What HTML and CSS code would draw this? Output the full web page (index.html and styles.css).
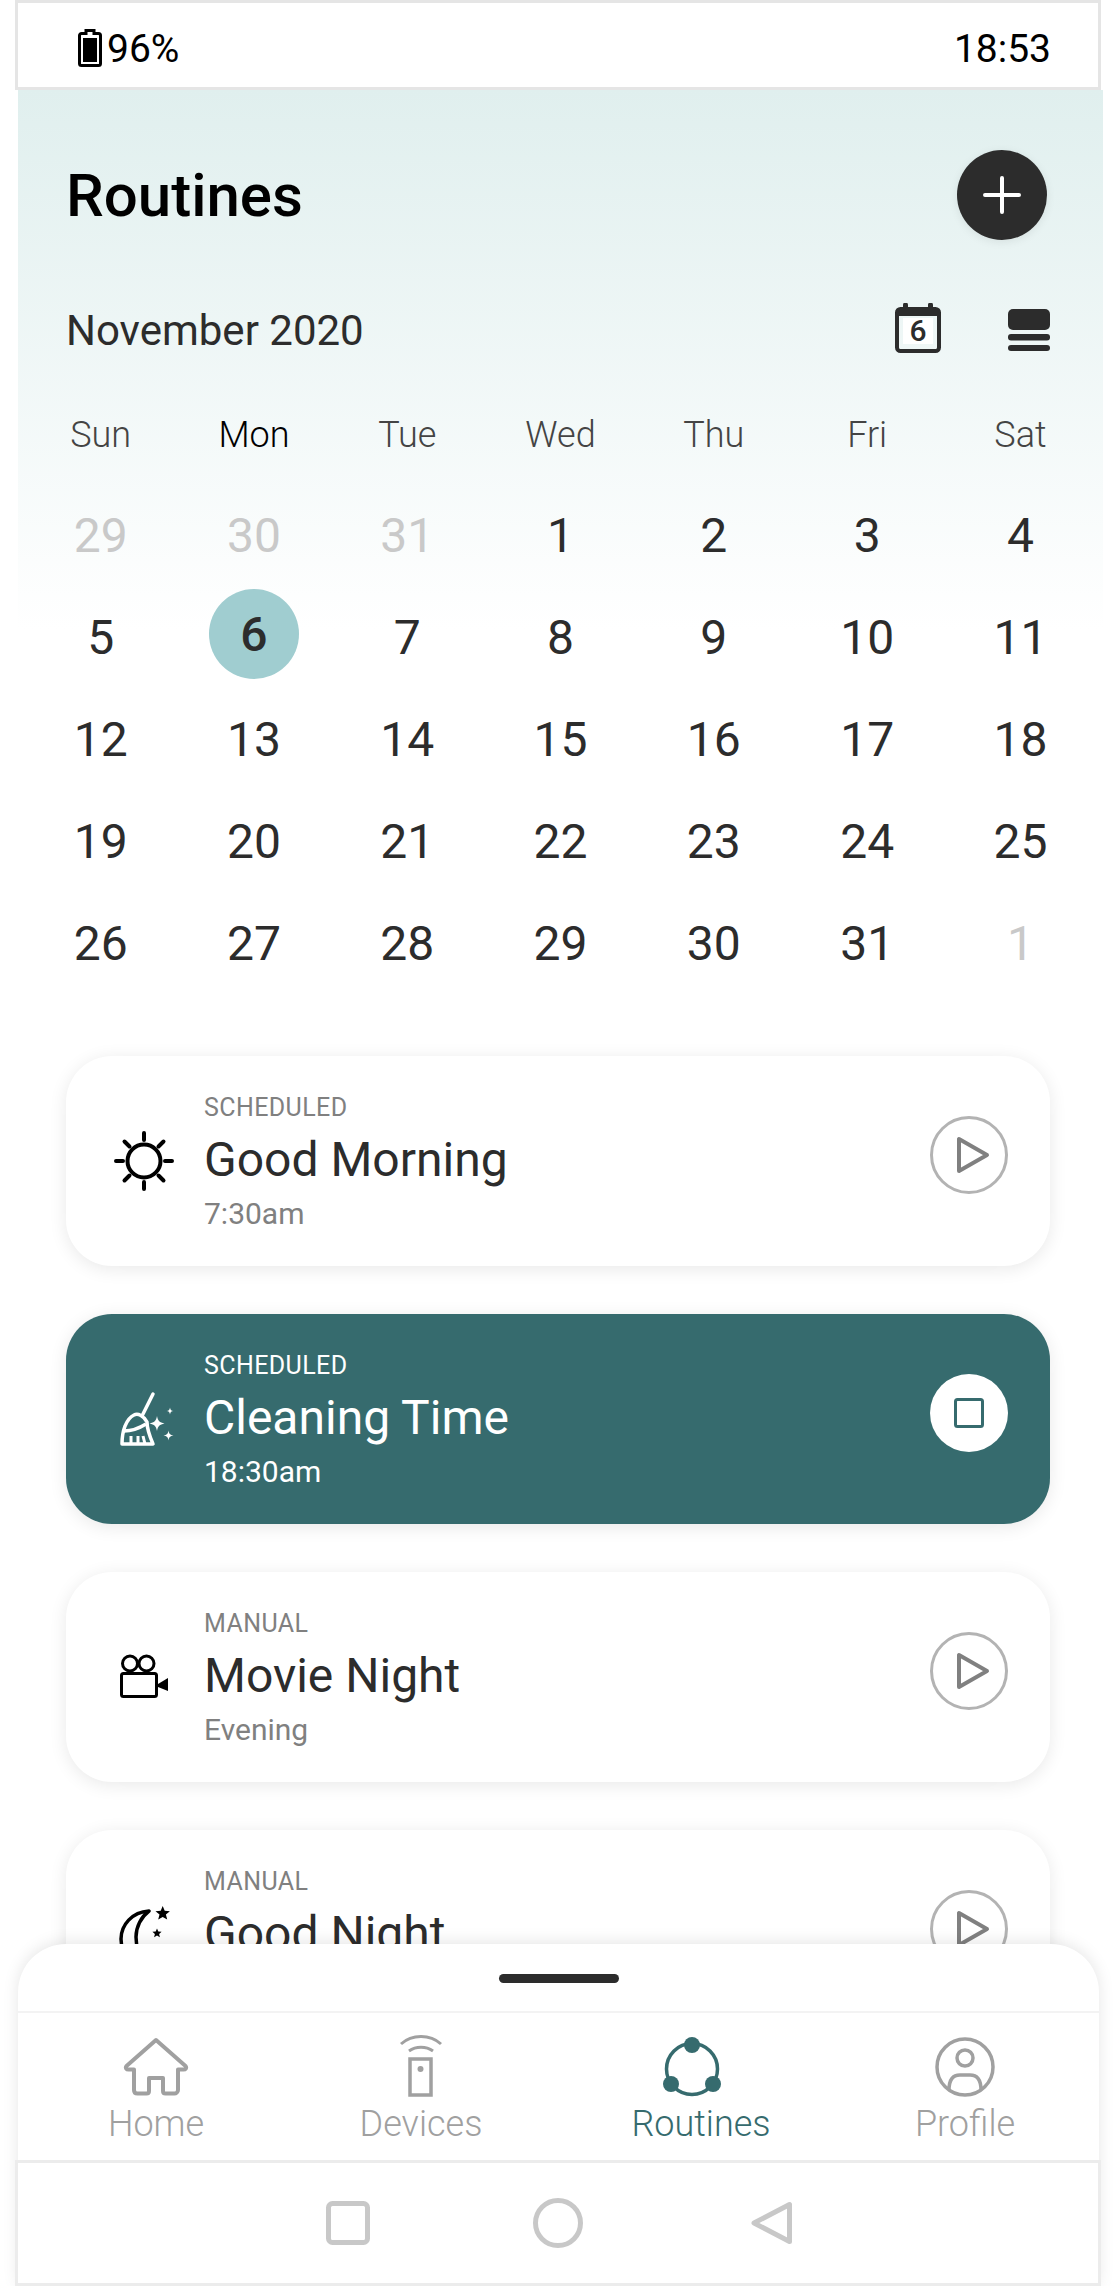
FILE: index.html
```html
<!DOCTYPE html>
<html lang="en">
<head>
    <meta charset="UTF-8">
    <meta name="viewport" content="width=device-width, initial-scale=1.0">
    <title>Routines</title>
    <link rel="stylesheet" href="styles.css">
</head>
<body>
    <div class="phone">
        <div class="status-bar">
            <div class="status-left">
                <svg class="battery-icon" viewBox="0 0 24 38">
                    <path d="M8 1.500h8v3h4.500a2 2 0 0 1 2 2v28a2 2 0 0 1-2 2h-17a2 2 0 0 1-2-2v-28a2 2 0 0 1 2-2H8z" fill="none" stroke="#000" stroke-width="3"/>
                    <rect x="5" y="9" width="14" height="24" fill="#000"/>
                </svg>
                <span>96%</span>
            </div>
            <span>18:53</span>
        </div>

        <div class="screen">
            <div class="title-row">
                <h1>Routines</h1>
                <button class="add-btn">
                    <svg viewBox="0 0 38 38" width="38" height="38">
                        <path d="M19 2v34M2 19h34" stroke="#fff" stroke-width="4" stroke-linecap="round"/>
                    </svg>
                </button>
            </div>

            <div class="month-row">
                <div class="month-name">November 2020</div>
                <svg class="cal-icon" viewBox="0 0 46 50" width="46" height="50">
                    <path d="M10.500 2v7M35.500 2v7" stroke="#2c2c2c" stroke-width="5" stroke-linecap="round"/>
                    <rect x="2" y="6" width="42" height="42" rx="3.500" fill="none" stroke="#2c2c2c" stroke-width="4"/>
                    <rect x="2" y="6" width="42" height="7" fill="#2c2c2c"/>
                    <rect x="8" y="15" width="30" height="26" fill="#fff"/>
                    <text x="23" y="38" text-anchor="middle" class="cal-icon-day">6</text>
                </svg>
                <svg class="tile-icon" viewBox="0 0 42 42" width="42" height="42">
                    <rect width="42" height="21" rx="5" fill="#2c2c2c"/>
                    <rect y="25" width="42" height="6.500" rx="3" fill="#2c2c2c"/>
                    <rect y="36" width="42" height="6" rx="3" fill="#2c2c2c"/>
                </svg>
            </div>

            <div class="calendar">
                <div class="week-head">Sun</div>
                <div class="week-head week-head-now">Mon</div>
                <div class="week-head">Tue</div>
                <div class="week-head">Wed</div>
                <div class="week-head">Thu</div>
                <div class="week-head">Fri</div>
                <div class="week-head">Sat</div>

                <div class="day day-off">29</div>
                <div class="day day-off">30</div>
                <div class="day day-off">31</div>
                <div class="day">1</div>
                <div class="day">2</div>
                <div class="day">3</div>
                <div class="day">4</div>

                <div class="day">5</div>
                <div class="day"><span class="day-selected">6</span></div>
                <div class="day">7</div>
                <div class="day">8</div>
                <div class="day">9</div>
                <div class="day">10</div>
                <div class="day">11</div>

                <div class="day">12</div>
                <div class="day">13</div>
                <div class="day">14</div>
                <div class="day">15</div>
                <div class="day">16</div>
                <div class="day">17</div>
                <div class="day">18</div>

                <div class="day">19</div>
                <div class="day">20</div>
                <div class="day">21</div>
                <div class="day">22</div>
                <div class="day">23</div>
                <div class="day">24</div>
                <div class="day">25</div>

                <div class="day">26</div>
                <div class="day">27</div>
                <div class="day">28</div>
                <div class="day">29</div>
                <div class="day">30</div>
                <div class="day">31</div>
                <div class="day day-off">1</div>
            </div>

            <div class="routine-list">
                <div class="routine-card">
                    <svg class="routine-icon" viewBox="0 0 60 60" width="60" height="60">
                        <circle cx="30" cy="30" r="16.500" fill="none" stroke="#000" stroke-width="4"/>
                        <path d="M30 2v7M30 51v7M2 30h7M51 30h7M10.500 10.500l5 5M44.500 44.500l5 5M10.500 49.500l5-5M44.500 15.500l5-5" stroke="#000" stroke-width="4" stroke-linecap="round"/>
                    </svg>
                    <div class="routine-text">
                        <div class="routine-type">SCHEDULED</div>
                        <div class="routine-name">Good Morning</div>
                        <div class="routine-time">7:30am</div>
                    </div>
                    <button class="play-btn">
                        <svg viewBox="0 0 34 38" width="34" height="38">
                            <path d="M3 3v32l28-16z" fill="none" stroke="#808080" stroke-width="4" stroke-linejoin="round"/>
                        </svg>
                    </button>
                </div>

                <div class="routine-card routine-card-active">
                    <svg class="routine-icon" viewBox="0 0 60 60" width="60" height="60">
                        <path d="M39 5L28 27" stroke="#fff" stroke-width="3.500" stroke-linecap="round"/>
                        <path d="M20 26C24 24 30 27 33 33C33 40 36 48 39 55H8C8 42 12 30 20 26z" fill="none" stroke="#fff" stroke-width="3.500" stroke-linejoin="round"/>
                        <path d="M10 42C16 42 24 40 32 35" fill="none" stroke="#fff" stroke-width="3.500"/>
                        <path d="M17 55v-8M24 55v-8M31 55l-2-8" stroke="#fff" stroke-width="3"/>
                        <path d="M43 27c1 5 2.500 6.500 7.500 7.500-5 1-6.500 2.500-7.500 7.500-1-5-2.500-6.500-7.500-7.500 5-1 6.500-2.500 7.500-7.500z" fill="#fff"/>
                        <path d="M56 18.500c.4 2.500 1 3.100 3.500 3.500-2.500.4-3.100 1-3.500 3.500-.4-2.500-1-3.100-3.500-3.500 2.500-.4 3.100-1 3.500-3.500z" fill="#fff"/>
                        <path d="M54.500 41.500c.6 3.500 1.500 4.400 5 5-3.500.6-4.400 1.500-5 5-.6-3.500-1.500-4.400-5-5 3.500-.6 4.400-1.500 5-5z" fill="#fff"/>
                    </svg>
                    <div class="routine-text">
                        <div class="routine-type">SCHEDULED</div>
                        <div class="routine-name">Cleaning Time</div>
                        <div class="routine-time">18:30am</div>
                    </div>
                    <button class="play-btn stop-btn">
                        <svg viewBox="0 0 30 30" width="30" height="30">
                            <rect x="1.500" y="1.500" width="27" height="27" rx="2" fill="none" stroke="#366b6e" stroke-width="3"/>
                        </svg>
                    </button>
                </div>

                <div class="routine-card">
                    <svg class="routine-icon" viewBox="0 0 60 60" width="60" height="60">
                        <circle cx="16" cy="16.500" r="7.500" fill="none" stroke="#000" stroke-width="3"/>
                        <circle cx="32.500" cy="16.500" r="7.500" fill="none" stroke="#000" stroke-width="3"/>
                        <rect x="7.500" y="26.500" width="35" height="23" rx="2" fill="#fff" stroke="#000" stroke-width="3"/>
                        <path d="M44 37l10-6v13l-10-4z" fill="#000"/>
                    </svg>
                    <div class="routine-text">
                        <div class="routine-type">MANUAL</div>
                        <div class="routine-name">Movie Night</div>
                        <div class="routine-time">Evening</div>
                    </div>
                    <button class="play-btn">
                        <svg viewBox="0 0 34 38" width="34" height="38">
                            <path d="M3 3v32l28-16z" fill="none" stroke="#808080" stroke-width="4" stroke-linejoin="round"/>
                        </svg>
                    </button>
                </div>

                <div class="routine-card">
                    <svg class="routine-icon" viewBox="0 0 60 60" width="60" height="60">
                        <path d="M35 6C18 7 7 20 7 34C7 48 18 58 32 60C24 50 22 40 22 32C22 22 27 12 35 6z" fill="none" stroke="#000" stroke-width="3.500" stroke-linejoin="round"/>
                        <path d="M48.700 1l2 4.800 5.200.4-4 3.400 1.300 5-4.500-2.700-4.500 2.700 1.300-5-4-3.400 5.200-.4z" fill="#000"/>
                        <path d="M43 23.500l1.300 3 3.300.3-2.500 2.200.8 3.200-2.900-1.700-2.900 1.700.8-3.200-2.500-2.200 3.300-.3z" fill="#000"/>
                    </svg>
                    <div class="routine-text">
                        <div class="routine-type">MANUAL</div>
                        <div class="routine-name">Good Night</div>
                        <div class="routine-time">Night</div>
                    </div>
                    <button class="play-btn">
                        <svg viewBox="0 0 34 38" width="34" height="38">
                            <path d="M3 3v32l28-16z" fill="none" stroke="#808080" stroke-width="4" stroke-linejoin="round"/>
                        </svg>
                    </button>
                </div>
            </div>
        </div>

        <div class="sheet">
            <div class="sheet-top"><div class="sheet-handle"></div></div>
            <div class="tabs">
                <div class="tab">
                    <svg viewBox="0 0 66 60" width="66" height="60">
                        <path d="M33 3L3.500 29c-1.500 2 0 3.500 2 3.500H11V53c0 2 1 3.500 3.500 3.500h9c1.500 0 2.500-1 2.500-2.500V41h14v13c0 1.500 1 2.500 2.500 2.500h9C53 56.500 55 55 55 53V32.500h5.500c2 0 3.500-1.500 2-3.500z" fill="none" stroke="#a0a0a0" stroke-width="4" stroke-linejoin="round"/>
                    </svg>
                    <span class="tab-label">Home</span>
                </div>
                <div class="tab">
                    <svg viewBox="0 0 44 64" width="44" height="64">
                        <path d="M2 11C13 1 31 1 42 11M10 18c7-5 17-5 24 0" fill="none" stroke="#a0a0a0" stroke-width="3"/>
                        <rect x="11" y="26" width="21" height="36" fill="none" stroke="#a0a0a0" stroke-width="3.500"/>
                        <circle cx="21.500" cy="36" r="3" fill="#a0a0a0"/>
                    </svg>
                    <span class="tab-label">Devices</span>
                </div>
                <div class="tab tab-active">
                    <svg viewBox="0 0 60 60" width="60" height="60">
                        <circle cx="30" cy="32" r="25.500" fill="none" stroke="#366b6e" stroke-width="3.500"/>
                        <circle cx="30" cy="8" r="8" fill="#366b6e"/>
                        <circle cx="9" cy="47" r="8" fill="#366b6e"/>
                        <circle cx="51" cy="47" r="8" fill="#366b6e"/>
                    </svg>
                    <span class="tab-label">Routines</span>
                </div>
                <div class="tab">
                    <svg viewBox="0 0 60 60" width="60" height="60">
                        <circle cx="30" cy="30" r="28" fill="none" stroke="#a0a0a0" stroke-width="3.500"/>
                        <circle cx="30" cy="21" r="8" fill="none" stroke="#a0a0a0" stroke-width="3.500"/>
                        <path d="M14 53c0-10 4-15 11-15h10c7 0 11 5 11 15" fill="none" stroke="#a0a0a0" stroke-width="3.500"/>
                    </svg>
                    <span class="tab-label">Profile</span>
                </div>
            </div>
            <div class="system-nav">
                <svg viewBox="0 0 44 44" width="44" height="44">
                    <rect x="2.500" y="2.500" width="39" height="39" rx="4" fill="none" stroke="#c8c8c8" stroke-width="5"/>
                </svg>
                <svg viewBox="0 0 50 50" width="50" height="50">
                    <circle cx="25" cy="25" r="22.500" fill="none" stroke="#c8c8c8" stroke-width="5"/>
                </svg>
                <svg class="back-icon" viewBox="0 0 42 44" width="42" height="44">
                    <path d="M38.500 3.500v37L3 22z" fill="none" stroke="#c8c8c8" stroke-width="5" stroke-linejoin="round"/>
                </svg>
            </div>
        </div>
    </div>
</body>
</html>
```

FILE: styles.css
```css
* {
    margin: 0;
    padding: 0;
    box-sizing: border-box;
}

body {
    font-family: Roboto, "Noto Sans", sans-serif;
    background: #fff;
    color: #2c2c2c;
    overflow: hidden;
}

button {
    border: none;
    cursor: pointer;
}

.phone {
    position: relative;
    width: 1116px;
    height: 2286px;
    overflow: hidden;
}

.status-bar {
    display: flex;
    justify-content: space-between;
    align-items: center;
    width: 1086px;
    height: 90px;
    margin-left: 15px;
    padding: 8px 47px 0 60px;
    border: 3px solid #e5e5e5;
    background: #fff;
    font-size: 39px;
    color: #000;
}

.status-left {
    display: flex;
    align-items: center;
    gap: 5px;
}

.battery-icon {
    width: 24px;
    height: 38px;
    margin-bottom: 2px;
}

.screen {
    width: 1085px;
    height: 2196px;
    margin-left: 18px;
    background: linear-gradient(180deg, #e0efee 0, #fff 540px);
}

.title-row {
    display: flex;
    justify-content: space-between;
    align-items: center;
    padding: 60px 56px 0 48px;
}

.title-row h1 {
    font-size: 60px;
    font-weight: 500;
    color: #000;
}

.add-btn {
    display: flex;
    align-items: center;
    justify-content: center;
    width: 90px;
    height: 90px;
    border-radius: 50%;
    background: #2c2c2c;
    box-shadow: 0 2px 10px rgba(0,0,0,0.08);
}

.month-row {
    display: flex;
    align-items: center;
    height: 50px;
    margin-top: 65px;
    padding: 0 53px 0 48px;
}

.month-name {
    flex: 1;
    font-size: 42px;
}

.cal-icon {
    margin-bottom: 5px;
}

.tile-icon {
    margin-left: 67px;
}

.cal-icon-day {
    font-size: 30px;
    font-weight: 500;
    fill: #2c2c2c;
}

.calendar {
    display: grid;
    grid-template-columns: repeat(7, 153.300px);
    grid-template-rows: 74px repeat(5, 102px);
    margin-top: 55px;
    padding-left: 6px;
}

.week-head {
    display: flex;
    align-items: center;
    justify-content: center;
    height: 50px;
    font-size: 36px;
    font-weight: 300;
    color: #444;
}

.week-head-now {
    color: #000;
}

.day {
    display: flex;
    align-items: center;
    justify-content: center;
    font-size: 48px;
}

.day-off {
    color: #c9c9c9;
}

.day-selected {
    display: flex;
    align-items: center;
    justify-content: center;
    width: 90px;
    height: 90px;
    margin-top: -6px;
    border-radius: 50%;
    background: #a0cdd0;
    font-weight: 500;
}

.routine-list {
    display: flex;
    flex-direction: column;
    gap: 48px;
    margin: 62px 0 0 48px;
    width: 984px;
}

.routine-card {
    display: flex;
    align-items: flex-start;
    flex: none;
    height: 210px;
    padding: 0 42px 0 48px;
    border-radius: 46px;
    background: #fff;
    box-shadow: 0 3px 18px rgba(0,0,0,0.09);
}

.routine-icon {
    flex: none;
    margin-top: 75px;
}

.routine-text {
    flex: 1;
    margin-left: 30px;
    padding-top: 37px;
}

.routine-type {
    font-size: 25px;
    line-height: 30px;
    letter-spacing: 0.4px;
    color: #808080;
}

.routine-name {
    font-size: 48px;
    line-height: 56px;
    margin-top: 9px;
}

.routine-time {
    font-size: 30px;
    line-height: 36px;
    margin-top: 8px;
    color: #808080;
}

.play-btn {
    display: flex;
    align-items: center;
    justify-content: center;
    flex: none;
    width: 78px;
    height: 78px;
    margin-top: 60px;
    padding-left: 8px;
    border: 3px solid #b3b3b3;
    border-radius: 50%;
    background: #fff;
}

.routine-card-active {
    background: #366b6e;
    color: #fff;
}

.routine-card-active .routine-type,
.routine-card-active .routine-time {
    color: #fff;
}

.stop-btn {
    padding-left: 0;
    border: none;
}

/* bottom sheet sits over the list */
.sheet {
    position: absolute;
    left: 18px;
    right: 17px;
    bottom: 0;
    height: 342px;
    border-radius: 48px 48px 0 0;
    background: #fff;
    box-shadow: 0 -2px 16px rgba(0,0,0,0.1);
}

.sheet-top {
    display: flex;
    justify-content: center;
    height: 69px;
    padding-top: 30px;
    border-bottom: 2px solid #f3f3f3;
}

.sheet-handle {
    width: 120px;
    height: 9px;
    border-radius: 5px;
    background: #2c2c2c;
}

.tabs {
    display: grid;
    grid-template-columns: 276px 254px 296px 242px;
    height: 147px;
    padding-top: 18px;
}

.tab {
    display: flex;
    flex-direction: column;
    align-items: center;
    justify-content: flex-end;
    padding-bottom: 15px;
    color: #a0a0a0;
}

.tab-label {
    margin-top: 6px;
    font-size: 36px;
    font-weight: 300;
    line-height: 42px;
}

.tab-active {
    color: #366b6e;
}

.tab-active svg {
    margin-right: 8px;
}

.tab-active .tab-label {
    margin-left: 10px;
}

.system-nav {
    display: flex;
    justify-content: center;
    align-items: center;
    gap: 163px;
    height: 126px;
    margin: 0 -2px 0 -3px;
    padding-left: 3px;
    border: 3px solid #ececec;
    background: #fff;
}

.back-icon {
    margin-left: 5px;
}
```
